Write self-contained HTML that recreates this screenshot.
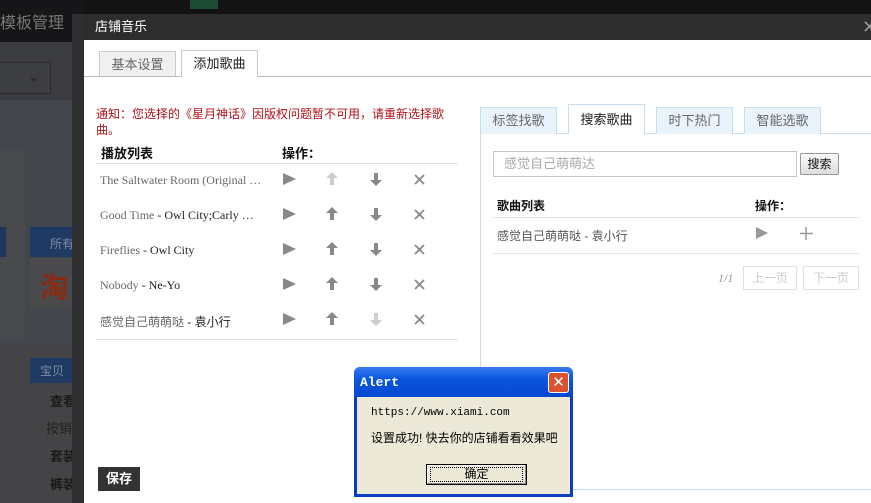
<!DOCTYPE html>
<html><head><meta charset="utf-8"><style>
*{margin:0;padding:0;box-sizing:border-box}
body{width:871px;height:503px;overflow:hidden;position:relative;background:#424346;font-family:"Liberation Sans","Noto Sans CJK SC",sans-serif;font-size:12px;color:#333}
.a{position:absolute;white-space:nowrap}
.serif{font-family:"Liberation Serif","Noto Sans CJK SC",serif}
.tab{position:absolute;border:1px solid #c9c9c9;border-bottom:none;background:#f0f0f0;color:#666;font-size:13px;text-align:center}
.rt{position:absolute;border:1px solid #c8dcec;border-bottom:none;background:#e9f3fb;color:#666;font-size:13px;text-align:center;line-height:26px;height:27px;top:107px;width:77px}
.row{position:absolute;left:100px;font-size:12px;color:#666;white-space:nowrap}
.row b{font-weight:normal;color:#222}
</style></head><body>
<div class="a" style="left:0;top:0;width:871px;height:14px;background:#131313"></div>
<div class="a" style="left:0;top:0;width:84px;height:42px;background:#161618"></div>
<div class="a" style="left:0;top:9px;color:#777;font-size:16px">模板管理</div>
<div class="a" style="left:190px;top:0;width:28px;height:9px;background:#1d4a33"></div>
<div class="a" style="left:0;top:42px;width:72px;height:60px;background:#3b3c40"></div>
<div class="a" style="left:-4px;top:62px;width:55px;height:32px;border:1px solid #2b2b2e;background:#3d3e42"></div>
<div class="a" style="left:28px;top:68px;color:#222;font-size:14px">⌄</div>
<div class="a" style="left:0;top:100px;width:72px;height:245px;background:#43464c"></div>
<div class="a" style="left:0;top:150px;width:25px;height:190px;background:#48494c"></div>
<div class="a" style="left:0;top:227px;width:6px;height:30px;background:#1f375c"></div>
<div class="a" style="left:30px;top:227px;width:42px;height:30px;background:#1f3a63;color:#7f8da5;padding:8px 0 0 20px;overflow:hidden">所有</div>
<div class="a" style="left:30px;top:258px;width:42px;height:50px;background:#4a4a4c;color:#8a2a10;font-size:28px;font-weight:bold;padding:8px 0 0 10px;overflow:hidden">淘</div>
<div class="a" style="left:0;top:345px;width:72px;height:158px;background:#444446"></div>
<div class="a" style="left:30px;top:358px;width:42px;height:25px;background:#1f3a63;color:#7f8da5;padding:4px 0 0 10px;overflow:hidden">宝贝</div>
<div class="a" style="left:50px;top:391px;color:#1a1a1a;font-weight:bold;font-size:13px">查看</div>
<div class="a" style="left:46px;top:418px;color:#222;font-size:13px">按销</div>
<div class="a" style="left:50px;top:446px;color:#1a1a1a;font-weight:bold;font-size:13px">套装</div>
<div class="a" style="left:50px;top:474px;color:#1a1a1a;font-weight:bold;font-size:13px">裤装</div>
<div class="a" style="left:72px;top:14px;width:12px;height:489px;background:#2f2f31"></div>

<div class="a" style="left:84px;top:14px;width:787px;height:26px;background:#2d2d2d;color:#fff;font-size:13px;line-height:26px;padding-left:11px">店铺音乐</div>
<div class="a" style="left:862px;top:17px;color:#999;font-size:18px">✕</div>
<div class="a" style="left:84px;top:40px;width:787px;height:463px;background:#fff"></div>
<div class="a" style="left:84px;top:76px;width:787px;height:1px;background:#bbb"></div>
<div class="tab" style="left:99px;top:51px;width:77px;height:25px;line-height:26px">基本设置</div>
<div class="tab" style="left:181px;top:50px;width:77px;height:27px;line-height:26px;background:#fff;color:#222">添加歌曲</div>

<div class="a" style="left:96px;top:106px;width:360px;color:#b0131b;line-height:16px;font-size:12px;white-space:normal">通知：您选择的《星月神话》因版权问题暂不可用，请重新选择歌曲。</div>
<div class="a" style="left:101px;top:143px;font-weight:bold;color:#111;font-size:13px">播放列表</div>
<div class="a" style="left:282px;top:143px;font-weight:bold;color:#111;font-size:13px">操作：</div>
<div class="a" style="left:96px;top:163px;width:362px;height:1px;background:#e3e3e3"></div>
<div class="a" style="left:96px;top:339px;width:362px;height:1px;background:#e3e3e3"></div>

<div class="row serif" style="top:173px">The Saltwater Room (Original …</div>
<div class="row serif" style="top:208px">Good Time <b>- Owl City;Carly …</b></div>
<div class="row serif" style="top:243px">Fireflies <b>- Owl City</b></div>
<div class="row serif" style="top:278px">Nobody <b>- Ne-Yo</b></div>
<div class="row" style="top:313px">感觉自己萌萌哒 <b>- 袁小行</b></div>

<svg class="a" style="left:270px;top:160px" width="200" height="180">
<g fill="#888">
<path d="M13 13l13 6-13 6z"/><path d="M13 48l13 6-13 6z"/><path d="M13 83l13 6-13 6z"/><path d="M13 118l13 6-13 6z"/><path d="M13 153l13 6-13 6z"/>
</g>
<g>
<path d="M62 12l-6 6h4v7h4v-7h4z" fill="#ccc"/>
<path d="M62 47l-6 6h4v7h4v-7h4z" fill="#888"/>
<path d="M62 82l-6 6h4v7h4v-7h4z" fill="#888"/>
<path d="M62 117l-6 6h4v7h4v-7h4z" fill="#888"/>
<path d="M62 152l-6 6h4v7h4v-7h4z" fill="#888"/>
<path d="M106 26l-6-6h4v-7h4v7h4z" fill="#888"/>
<path d="M106 61l-6-6h4v-7h4v7h4z" fill="#888"/>
<path d="M106 96l-6-6h4v-7h4v7h4z" fill="#888"/>
<path d="M106 131l-6-6h4v-7h4v7h4z" fill="#888"/>
<path d="M106 166l-6-6h4v-7h4v7h4z" fill="#ccc"/>
</g>
<g stroke="#888" stroke-width="1.8">
<path d="M145 15l9 9M154 15l-9 9"/><path d="M145 50l9 9M154 50l-9 9"/><path d="M145 85l9 9M154 85l-9 9"/><path d="M145 120l9 9M154 120l-9 9"/><path d="M145 155l9 9M154 155l-9 9"/>
</g></svg>

<div class="a" style="left:98px;top:467px;width:42px;height:24px;background:#333;color:#fff;font-weight:bold;font-size:13px;text-align:center;line-height:24px">保存</div>

<div class="a" style="left:480px;top:133px;width:391px;height:357px;border-left:1px solid #c8dcec;border-top:1px solid #c8dcec;border-bottom:1px solid #c8dcec"></div>
<div class="rt" style="left:480px">标签找歌</div>
<div class="rt" style="left:568px;top:104px;height:30px;line-height:29px;background:#fff;color:#222">搜索歌曲</div>
<div class="rt" style="left:656px">时下热门</div>
<div class="rt" style="left:744px">智能选歌</div>
<div class="a" style="left:493px;top:151px;width:304px;height:26px;border:1px solid #c6c6c6;color:#aaa;font-size:13px;line-height:24px;padding-left:10px">感觉自己萌萌达</div>
<div class="a" style="left:800px;top:153px;width:39px;height:22px;border:1px solid #999;background:linear-gradient(#fafafa,#ddd);color:#111;font-size:12px;text-align:center;line-height:20px;border-radius:2px">搜索</div>
<div class="a" style="left:497px;top:197px;font-weight:bold;color:#111;font-size:12px">歌曲列表</div>
<div class="a" style="left:755px;top:197px;font-weight:bold;color:#111;font-size:12px">操作：</div>
<div class="a" style="left:493px;top:217px;width:366px;height:1px;background:#e3e3e3"></div>
<div class="a" style="left:497px;top:227px;color:#555;font-size:12px">感觉自己萌萌哒 - 袁小行</div>
<svg class="a" style="left:750px;top:224px" width="70" height="20"><path d="M6 3l12 6-12 6z" fill="#999"/><path d="M56 3v13M50 9.5h13" stroke="#999" stroke-width="1.5"/></svg>
<div class="a" style="left:493px;top:253px;width:366px;height:1px;background:#e3e3e3"></div>
<div class="a serif" style="left:718px;top:271px;color:#999;font-style:italic;font-size:12px">1/1</div>
<div class="a" style="left:743px;top:266px;width:54px;height:24px;border:1px solid #e0e0e0;color:#ccc;font-size:12px;text-align:center;line-height:22px">上一页</div>
<div class="a" style="left:803px;top:266px;width:56px;height:24px;border:1px solid #e0e0e0;color:#ccc;font-size:12px;text-align:center;line-height:22px">下一页</div>

<div class="a" style="left:354px;top:367px;width:219px;height:130px;background:#0a3ebf;border-radius:6px 6px 0 0"></div>
<div class="a" style="left:354px;top:367px;width:219px;height:30px;background:linear-gradient(#3a7cf0,#0a56e0 40%,#0447d0);border-radius:6px 6px 0 0"></div>
<div class="a" style="left:360px;top:375px;color:#fff;font-weight:bold;font-family:'Liberation Mono',monospace;font-size:13px">Alert</div>
<div class="a" style="left:548px;top:372px;width:21px;height:21px;background:#d9542e;border:1px solid #fff;border-radius:3px;color:#fff;font-size:15px;text-align:center;line-height:19px">✕</div>
<div class="a" style="left:357px;top:397px;width:213px;height:97px;background:#ece9d8"></div>
<div class="a" style="left:371px;top:407px;font-family:'Liberation Mono',monospace;font-size:11px;color:#000">https://www.xiami.com</div>
<div class="a" style="left:371px;top:429px;font-size:12px;color:#000">设置成功! 快去你的店铺看看效果吧</div>
<div class="a" style="left:426px;top:464px;width:101px;height:21px;border:1px solid #000;background:#ece9d8;box-shadow:inset -1px -1px #888,inset 1px 1px #fff"></div>
<div class="a" style="left:430px;top:467px;width:93px;height:15px;border:1px dotted #000;text-align:center;font-size:12px;line-height:13px;color:#000">确定</div>
</body></html>
